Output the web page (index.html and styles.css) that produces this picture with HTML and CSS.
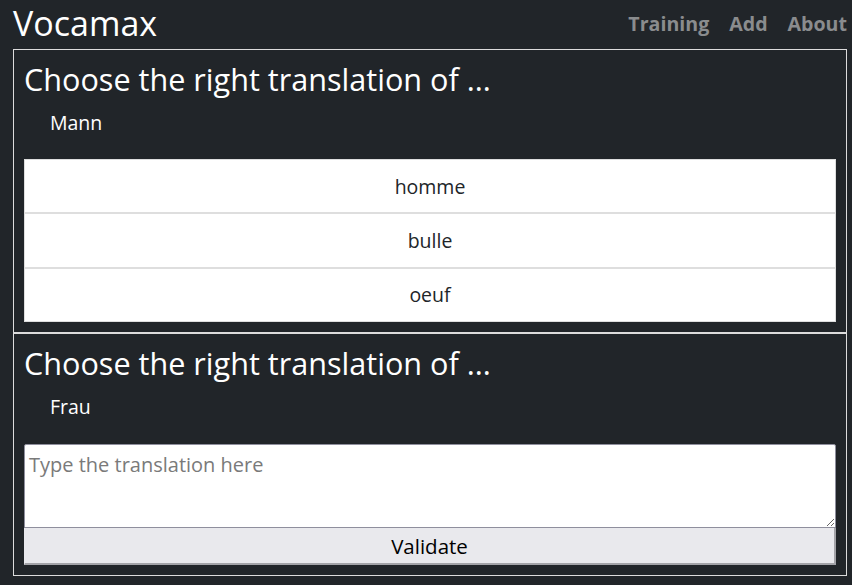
FILE: index.html
```html
<!DOCTYPE html>
<html lang="en">
<head>
<meta charset="utf-8">
<title>Vocamax</title>
<link rel="stylesheet" href="styles.css">
</head>
<body>
<div class="page">
  <header class="topbar">
    <h1 class="brand">Vocamax</h1>
    <nav class="nav">
      <a class="nav-link">Training</a>
      <a class="nav-link">Add</a>
      <a class="nav-link">About</a>
    </nav>
  </header>
  <section class="card">
    <h2 class="card-title">Choose the right translation of ...</h2>
    <p class="word">Mann</p>
    <ul class="choices">
      <li class="choice">homme</li>
      <li class="choice">bulle</li>
      <li class="choice">oeuf</li>
    </ul>
  </section>
  <section class="card card-next">
    <h2 class="card-title">Choose the right translation of ...</h2>
    <p class="word">Frau</p>
    <textarea class="answer" placeholder="Type the translation here"></textarea>
    <button class="validate" type="button">Validate</button>
  </section>
</div>
</body>
</html>
```
FILE: styles.css
```css
* { box-sizing: border-box; }

html, body {
  margin: 0;
  background: #212529;
}

body {
  font-family: "Open Sans", "Noto Sans", sans-serif;
  color: #ffffff;
}

.page {
  padding: 0 5px 0 13px;
}

.topbar {
  height: 49px;
  display: flex;
  justify-content: space-between;
  align-items: flex-start;
}

.brand {
  margin: 0;
  padding-top: 3px;
  font-size: 34px;
  line-height: 40px;
  font-weight: 500;
  color: #ffffff;
}

.nav {
  display: flex;
  gap: 20px;
  padding-top: 12px;
}

.nav-link {
  font-size: 19.6px;
  line-height: 24px;
  font-weight: 700;
  color: #8a8c8e;
  text-decoration: none;
}

.card {
  border: 1px solid #dcdcdc;
  padding: 10px;
}

.card-title {
  margin: 0;
  padding-top: 1px;
  font-size: 30.6px;
  line-height: 36px;
  font-weight: 500;
  color: #ffffff;
}

.word {
  margin: 12px 0 0;
  padding-left: 26px;
  font-size: 19.5px;
  line-height: 28px;
  color: #ffffff;
}

.choices {
  list-style: none;
  margin: 22px 0 0;
  padding: 0;
  background: #ffffff;
}

.choice {
  height: 54.33px;
  display: flex;
  align-items: center;
  justify-content: center;
  border: 1px solid #dedede;
  background: #ffffff;
  color: #212529;
  font-size: 19.5px;
}

.answer {
  display: block;
  width: 100%;
  height: 84px;
  margin: 23px 0 0;
  padding: 6px 4px 4px;
  border: 1px solid #8f8f9d;
  border-radius: 2px 2px 0 0;
  background: #ffffff;
  font-family: "Open Sans", "Noto Sans", sans-serif;
  font-size: 20px;
  color: #212529;
  resize: vertical;
}

.answer::placeholder {
  color: #7a7a7a;
}

.validate {
  display: block;
  width: 100%;
  height: 37px;
  margin: 0;
  padding: 2px 0 0;
  border-style: solid;
  border-color: #e9e9ed #a3a3a8 #a3a3a8 #e9e9ed;
  border-width: 0 2px 2px 1px;
  background: #e9e9ed;
  font-family: "Open Sans", "Noto Sans", sans-serif;
  font-size: 20.5px;
  color: #000000;
}
```
